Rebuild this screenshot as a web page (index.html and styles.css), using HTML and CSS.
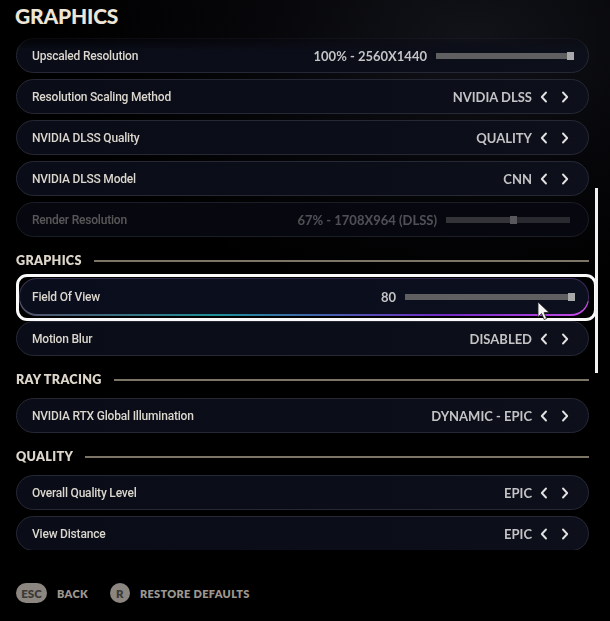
FILE: index.html
```html
<!DOCTYPE html>
<html>
<head>
<meta charset="utf-8">
<link rel="stylesheet" href="styles.css">
</head>
<body>
<div class="page">
  <h1 class="title">GRAPHICS</h1>
  <div class="viewport">
    <div class="list">
      <div class="row">
        <span class="label">Upscaled Resolution</span>
        <div class="ctrl slider-ctrl">
          <span class="value">100% - 2560X1440</span>
          <div class="track wide"><div class="fill" style="width:100%"></div></div>
        </div>
      </div>
      <div class="row">
        <span class="label">Resolution Scaling Method</span>
        <div class="ctrl"><span class="value">NVIDIA DLSS</span><span class="arrows"><svg class="chev" viewBox="0 0 8 12"><path d="M6 1.5 1.8 6 6 10.5"/></svg><svg class="chev" viewBox="0 0 8 12"><path d="M2 1.5 6.2 6 2 10.5"/></svg></span></div>
      </div>
      <div class="row">
        <span class="label">NVIDIA DLSS Quality</span>
        <div class="ctrl"><span class="value">QUALITY</span><span class="arrows"><svg class="chev" viewBox="0 0 8 12"><path d="M6 1.5 1.8 6 6 10.5"/></svg><svg class="chev" viewBox="0 0 8 12"><path d="M2 1.5 6.2 6 2 10.5"/></svg></span></div>
      </div>
      <div class="row">
        <span class="label">NVIDIA DLSS Model</span>
        <div class="ctrl"><span class="value">CNN</span><span class="arrows"><svg class="chev" viewBox="0 0 8 12"><path d="M6 1.5 1.8 6 6 10.5"/></svg><svg class="chev" viewBox="0 0 8 12"><path d="M2 1.5 6.2 6 2 10.5"/></svg></span></div>
      </div>
      <div class="row disabled">
        <span class="label">Render Resolution</span>
        <div class="ctrl slider-ctrl render">
          <span class="value">67% - 1708X964 (DLSS)</span>
          <div class="track mid"><div class="fill" style="width:57%"></div></div>
        </div>
      </div>

      <div class="section"><span>GRAPHICS</span><i class="rule"></i></div>
      <div class="focus">
        <div class="row active">
          <span class="label">Field Of View</span>
          <div class="ctrl slider-ctrl">
            <span class="value">80</span>
            <div class="track fov"><div class="fill" style="width:100%"></div></div>
          </div>
        </div>
        <svg class="cursor" viewBox="0 0 14 20"><path d="M1 1 L1 16 L4.6 12.6 L7.2 18.6 L9.6 17.5 L7 11.6 L12 11.4 Z" fill="#f4f4f4" stroke="#222" stroke-width="0.8"/></svg>
      </div>
      <div class="row">
        <span class="label">Motion Blur</span>
        <div class="ctrl"><span class="value">DISABLED</span><span class="arrows"><svg class="chev" viewBox="0 0 8 12"><path d="M6 1.5 1.8 6 6 10.5"/></svg><svg class="chev" viewBox="0 0 8 12"><path d="M2 1.5 6.2 6 2 10.5"/></svg></span></div>
      </div>

      <div class="section"><span>RAY TRACING</span><i class="rule"></i></div>
      <div class="row">
        <span class="label">NVIDIA RTX Global Illumination</span>
        <div class="ctrl"><span class="value">DYNAMIC - EPIC</span><span class="arrows"><svg class="chev" viewBox="0 0 8 12"><path d="M6 1.5 1.8 6 6 10.5"/></svg><svg class="chev" viewBox="0 0 8 12"><path d="M2 1.5 6.2 6 2 10.5"/></svg></span></div>
      </div>

      <div class="section"><span>QUALITY</span><i class="rule"></i></div>
      <div class="row">
        <span class="label">Overall Quality Level</span>
        <div class="ctrl"><span class="value">EPIC</span><span class="arrows"><svg class="chev" viewBox="0 0 8 12"><path d="M6 1.5 1.8 6 6 10.5"/></svg><svg class="chev" viewBox="0 0 8 12"><path d="M2 1.5 6.2 6 2 10.5"/></svg></span></div>
      </div>
      <div class="row">
        <span class="label">View Distance</span>
        <div class="ctrl"><span class="value">EPIC</span><span class="arrows"><svg class="chev" viewBox="0 0 8 12"><path d="M6 1.5 1.8 6 6 10.5"/></svg><svg class="chev" viewBox="0 0 8 12"><path d="M2 1.5 6.2 6 2 10.5"/></svg></span></div>
      </div>
    </div>
    <div class="scrollbar"></div>
  </div>
  <div class="footer">
    <span class="key pill">ESC</span><span class="hint">BACK</span>
    <span class="key round">R</span><span class="hint">RESTORE DEFAULTS</span>
  </div>
</div>
</body>
</html>
```
FILE: styles.css
```css
html, body {
  margin: 0;
  padding: 0;
  background: #000;
}
.page {
  width: 610px;
  height: 621px;
  overflow: hidden;
  position: relative;
  background:
    radial-gradient(ellipse 420px 260px at 470px 40px, #121319 0%, rgba(10,11,16,0.6) 50%, rgba(0,0,0,0) 100%),
    #000;
  font-family: "Roboto", "Liberation Sans", sans-serif;
}
.title {
  margin: 0;
  height: 38px;
  box-sizing: border-box;
  padding: 4px 0 0 15px;
  font-family: "Lato", "Liberation Sans", sans-serif;
  font-weight: 900;
  font-size: 21px;
  line-height: 24px;
  color: #ece5d8;
  letter-spacing: -0.2px;
}
.viewport {
  position: relative;
  height: 512px;
  overflow: hidden;
}
.list {
  display: flex;
  flex-direction: column;
  gap: 6px;
  padding-left: 16px;
  padding-right: 21px;
  width: 573px;
  -webkit-mask-image: linear-gradient(to bottom, rgba(0,0,0,0.25) 0, #000 12px);
  mask-image: linear-gradient(to bottom, rgba(0,0,0,0.25) 0, #000 12px);
}
.row {
  height: 35px;
  box-sizing: border-box;
  border: 1px solid #262836;
  border-radius: 18px;
  background: linear-gradient(90deg, #0a0c17 0%, #0b0d18 60%, #0d0f1a 100%);
  display: flex;
  align-items: center;
  justify-content: space-between;
  padding: 0 19px 0 15px;
  flex-shrink: 0;
}
.label {
  font-size: 12px;
  font-weight: 500;
  color: #dcd7ce;
  letter-spacing: -0.2px;
}
.ctrl {
  display: flex;
  align-items: center;
}
.value {
  font-family: "Lato", "Liberation Sans", sans-serif;
  font-weight: 700;
  font-size: 13px;
  letter-spacing: 0;
  color: #c4c4c6;
}
.arrows {
  display: flex;
  align-items: center;
  gap: 13px;
  margin-left: 8px;
}
.chev {
  width: 8px;
  height: 12px;
  fill: none;
  stroke: #e2e2e2;
  stroke-width: 1.9;
  stroke-linecap: round;
  stroke-linejoin: round;
}
.slider-ctrl { margin-right: -5px; }
.slider-ctrl .value { margin-right: 9px; }
.track {
  height: 6px;
  background: #4c4c50;
  position: relative;
}
.track .fill {
  height: 100%;
  background: #5f5f62;
  position: relative;
}
.track .fill::after {
  content: "";
  position: absolute;
  right: 0;
  top: -1px;
  width: 7px;
  height: 8px;
  background: #a8a8aa;
}
.track.wide { width: 138px; }
.track.mid { width: 124px; }
.track.fov { width: 170px; }
.render { margin-right: -1px; }
.disabled .label,
.disabled .value { opacity: 0.38; }
.disabled .track { opacity: 0.5; }
.disabled { border-color: #1b1d27; background: #07080f; }

.section {
  height: 30px;
  display: flex;
  align-items: center;
  gap: 12px;
  padding-top: 5px;
  box-sizing: border-box;
  font-family: "Lato", "Liberation Sans", sans-serif;
  font-weight: 800;
  font-size: 12.6px;
  letter-spacing: 0.3px;
  color: #ddd6ca;
  flex-shrink: 0;
}
.section .rule {
  flex: 1;
  height: 2px;
  background: #7b7467;
  margin-top: 1px;
}

.focus {
  position: relative;
  margin: -5px -8px -6px 0;
  height: 47px;
  box-sizing: border-box;
  border: 3px solid #fafafa;
  border-radius: 11px;
  padding: 1px 5px 0 0;
  flex-shrink: 0;
}
.row.active {
  height: 38px;
  border: 1px solid transparent;
  border-bottom-width: 2px;
  background:
    linear-gradient(90deg, #0a0d1b, #0c0f1e) padding-box,
    linear-gradient(90deg, #55506a 0%, #1e8e98 35%, #7229c4 75%, #c64be8 100%) bottom / 100% 40% no-repeat border-box,
    linear-gradient(90deg, #3a3350 0%, #2b2440 50%, #3d2a5c 100%) border-box;
  padding-left: 12px;
  padding-right: 14px;
}
.row.active .slider-ctrl { margin-right: -1px; }
.cursor {
  position: absolute;
  left: 518px;
  top: 24px;
  width: 14px;
  height: 20px;
}
.scrollbar {
  position: absolute;
  left: 595px;
  top: 150px;
  width: 3px;
  height: 185px;
  background: #f2f2f2;
}
.footer {
  display: flex;
  align-items: center;
  padding: 33px 0 0 16px;
  font-family: "Lato", "Liberation Sans", sans-serif;
  font-weight: 800;
  font-size: 11px;
  letter-spacing: 0.3px;
}
.key {
  height: 20px;
  display: flex;
  align-items: center;
  justify-content: center;
  background: #8b8680;
  color: #3c3a37;
  border-radius: 10px;
  font-size: 11.5px;
}
.key.pill { width: 31px; letter-spacing: 0; }
.key.round { width: 20px; }
.hint {
  color: #9d978f;
  margin-left: 10px;
  margin-right: 22px;
}
```
